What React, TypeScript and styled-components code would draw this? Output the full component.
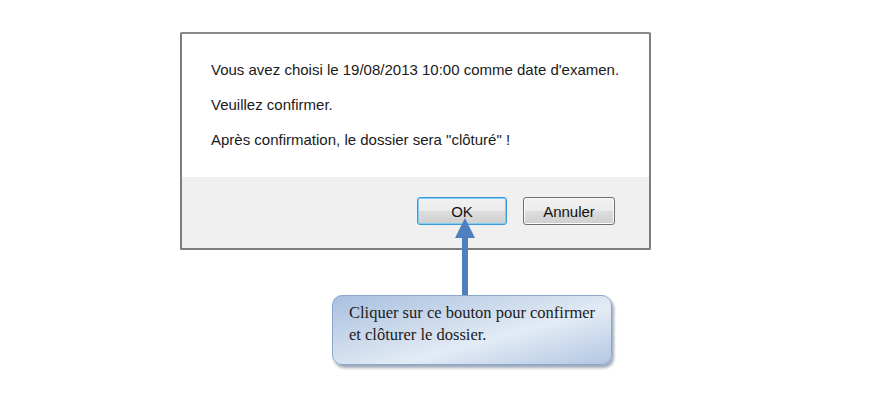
import React from "react";
import styled, { createGlobalStyle } from "styled-components";

const Global = createGlobalStyle`
  html, body { margin: 0; padding: 0; background: #ffffff; }
  body { width: 873px; height: 393px; overflow: hidden; }
`;

const Page = styled.div`
  position: relative;
  display: flex;
  flex-direction: column;
  padding: 32px 0 0 180px;
  width: 873px;
  height: 393px;
  box-sizing: border-box;
`;

const Dialog = styled.div`
  width: 471px;
  height: 218px;
  box-sizing: border-box;
  border: 2px solid #7d7d7d;
  border-top-color: #8a8a8a;
  border-radius: 2px;
  display: flex;
  flex-direction: column;
  background: #ffffff;
`;

const Body = styled.div`
  height: 143px;
  box-sizing: border-box;
  padding: 26px 0 0 29px;
  display: flex;
  flex-direction: column;
  gap: 16px;
  font-family: "Liberation Sans", Arial, sans-serif;
  font-size: 15px;
  color: #1a1a1a;
`;

const Line = styled.div`
  line-height: 19px;
  height: 19px;
`;

const Footer = styled.div`
  flex: 1;
  background: #f0f0f0;
  display: flex;
  justify-content: flex-end;
  align-items: flex-start;
  gap: 16px;
  padding: 20px 34px 0 0;
`;

const Button = styled.button<{ $focused?: boolean }>`
  width: ${(p) => (p.$focused ? 90 : 92)}px;
  height: 28px;
  box-sizing: border-box;
  border-radius: 3px;
  border: 1px solid ${(p) => (p.$focused ? "#3c9bd6" : "#707070")};
  box-shadow: ${(p) => (p.$focused ? "inset 0 0 0 1px #7fcdf2" : "inset 0 0 0 1px #fbfbfb")};
  background: linear-gradient(#f2f2f2 0%, #ebebeb 50%, #dddddd 51%, #cfcfcf 100%);
  font-family: "Liberation Sans", Arial, sans-serif;
  font-size: 15px;
  color: #111;
  padding: 0;
`;

const ArrowLayer = styled.svg`
  position: absolute;
  left: 453px;
  top: 216px;
`;

const Callout = styled.div`
  margin: 45px 0 0 152px;
  width: 280px;
  height: 70px;
  box-sizing: border-box;
  border-radius: 10px;
  border: 1px solid #8aa6cd;
  background: linear-gradient(165deg, #a9c0df 0%, #d4e0ef 45%, #e3ebf5 60%, #b2c7e3 100%);
  box-shadow: 2px 3px 3px rgba(80, 100, 130, 0.55);
  padding: 6px 10px 0 16px;
  font-family: "Liberation Serif", "Times New Roman", serif;
  font-size: 16.5px;
  line-height: 22px;
  color: #1b1b1b;
  white-space: nowrap;
`;

export default function App() {
  return (
    <>
      <Global />
      <Page>
        <Dialog>
          <Body>
            <Line>Vous avez choisi le 19/08/2013 10:00 comme date d'examen.</Line>
            <Line>Veuillez confirmer.</Line>
            <Line>Après confirmation, le dossier sera "clôturé" !</Line>
          </Body>
          <Footer>
            <Button $focused>OK</Button>
            <Button>Annuler</Button>
          </Footer>
        </Dialog>
        <Callout>
          Cliquer sur ce bouton pour confirmer
          <br />
          et clôturer le dossier.
        </Callout>
        <ArrowLayer width="24" height="80" viewBox="0 0 24 80">
          <polygon points="12,2 22,22 15,22 15,79 9,79 9,22 2,22" fill="#4f7fbe" />
        </ArrowLayer>
      </Page>
    </>
  );
}
